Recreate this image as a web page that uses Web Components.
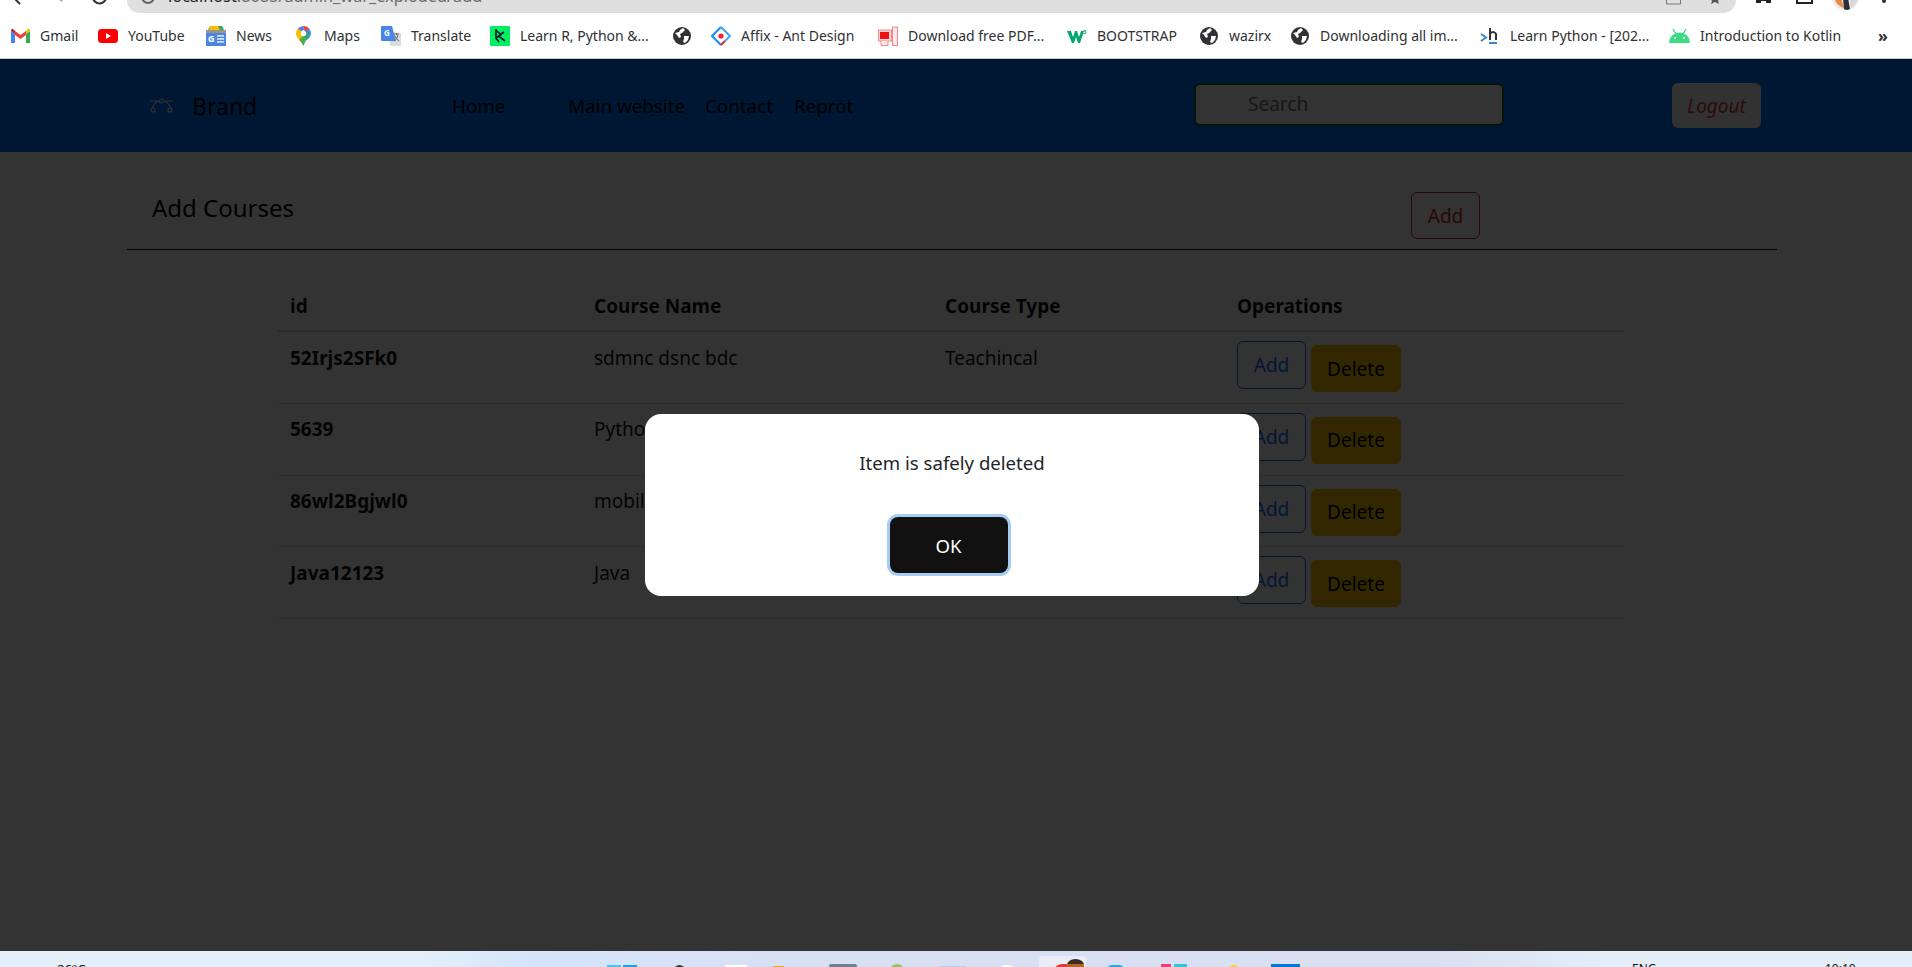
<!DOCTYPE html>
<html lang="en">
<head>
<meta charset="UTF-8">
<title>Add Courses</title>
<style>
  html, body { margin: 0; height: 100%; overflow: hidden; }
  body { font-family: "Noto Sans", "Liberation Sans", sans-serif; color: #212529; background: #fff; }
  #page { display: flex; flex-direction: column; height: 967px; overflow: hidden; }
</style>
<script>
  // small helper: every element gets an open shadow root from a template string
  function define(name, html, Base) {
    const template = document.createElement('template');
    template.innerHTML = html;
    customElements.define(name, class extends (Base || HTMLElement) {
      constructor() {
        super();
        this.attachShadow({ mode: 'open' });
        this.shadowRoot.appendChild(template.content.cloneNode(true));
      }
      connectedCallback() {
        // fill [data-attr] nodes from the attributes of the same name
        this.shadowRoot.querySelectorAll('[data-attr]').forEach(n => {
          n.textContent = this.getAttribute(n.dataset.attr) || '';
        });
        if (this.hasAttribute('w')) this.style.width = this.getAttribute('w') + 'px';
      }
    });
  }

  define('chrome-top', `
    <style>
      :host { display: flex; height: 13px; overflow: hidden; background: #fff; flex: none; }
      .left { width: 127px; flex: none; }
      .pill { width: 1609px; flex: none; height: 13px; background: #dfdfdf; border-radius: 0 0 20px 20px; display: flex; overflow: hidden; }
      .url { margin: -15px 0 0 13px; font-size: 16.3px; line-height: 22px; color: #6a6a6a; white-space: nowrap; }
      .url b { font-weight: 400; color: #222; }
      svg { display: block; flex: none; }
      .right { flex: 1; }
      .tools { margin: 0 9px 0 auto; }
    </style>
    <svg class="left" width="127" height="13" viewBox="0 0 127 13" fill="none" stroke="#333" stroke-width="2">
      <path d="M21 -3 L16 2 L20 6" transform="translate(0,-2)"/><path d="M58 -3 L62 1" stroke="#999"/>
      <path d="M106 -3 A6.5 6.5 0 1 1 93 -3" stroke-width="2.2"/>
    </svg>
    <div class="pill">
      <svg width="14" height="13" viewBox="0 0 14 13" fill="none" stroke="#666" stroke-width="2" style="margin-left:14px"><path d="M13 -3 A6 6 0 0 1 1 -3"/></svg>
      <div class="url"><b>localhost</b>:8085/admin_war_exploded/add</div>
      <svg class="tools" width="70" height="13" viewBox="0 0 70 13">
        <path d="M9.5 -3 v7 h14 v-7" fill="none" stroke="#777" stroke-width="1"/>
        <path d="M53 -2 h10 l-2 3 l1 3 l-4 -2 l-4 2 l1 -3z" fill="#555"/>
      </svg>
    </div>
    <svg class="right" width="176" height="13" viewBox="0 0 176 13">
      <path d="M20 -2 h15 v5 h-5 v-2 h-5 v2 h-5z" fill="#222"/>
      <path d="M61 -2 h15 v5 h-15z" fill="none" stroke="#222" stroke-width="2"/>
      <path d="M96 0 A14 14 0 0 0 123 0 v-2 h-27z" fill="#e8e8e8"/>
      <path d="M98 -2 h7 l3 10 q-7 -2 -10 -10z" fill="#e98b3a"/>
      <path d="M107 -2 h5 l2 11 q-4 2 -6 0z" fill="#2a2f3a"/>
      <path d="M114 -2 h8 q-2 7 -7 10z" fill="#d8d8d8"/>
      <circle cx="148" cy="1" r="2" fill="#333"/>
    </svg>
  `);

  define('book-mark', `
    <style>
      :host { display: flex; align-items: center; flex: none; height: 24px; }
      .icon { width: 21px; height: 20px; display: flex; align-items: center; justify-content: center; flex: none; }
      .text { margin-left: var(--gap, 10px); font-size: 14px; line-height: 20px; color: #303133; white-space: nowrap; }
    </style>
    <span class="icon"><slot name="icon"></slot></span><span class="text" data-attr="label"></span>
  `);

  define('book-marks', `
    <style>
      :host { display: flex; align-items: center; height: 45px; padding: 0 0 0 10px; background: #fff; border-bottom: 1px solid #cfcfcf; flex: none; overflow: hidden; box-sizing: content-box; }
    </style>
    <slot></slot>
  `);

  define('nav-bar', `
    <style>
      :host { display: grid; grid-template-columns: 302px 742px 478px 1fr; align-items: center; height: 93px; padding-left: 150px; background: #0073ff; flex: none; }
      .brand { display: flex; align-items: center; font-size: 23px; color: #000; }
      .brand svg { margin-right: 19px; }
      nav { display: flex; font-size: 18.8px; color: #000; }
      nav span { white-space: nowrap; }
      .search { width: 310px; height: 43px; box-sizing: border-box; border: 2px solid #0f6b2c; border-radius: 6px; background: #fff; padding-left: 52px; font-size: 19px; line-height: 38px; color: #6c757d; margin-top: -2px; }
      .logout { width: 89px; height: 45px; box-sizing: border-box; border-radius: 6px; background: #f8f9fa; color: #dc3545; font-style: italic; font-size: 19px; line-height: 47px; text-align: center; }
    </style>
    <div class="brand">
      <svg width="23" height="15" viewBox="0 0 23 15" fill="none" stroke="#eee" stroke-width="1.2">
        <circle cx="11.5" cy="3" r="2"/><circle cx="3" cy="12" r="2"/><circle cx="20" cy="12" r="2"/>
        <path d="M9.5 3 H0 M13.5 3 H23 M3 10 Q3 5 9.5 3 M20 10 Q20 5 13.5 3"/>
      </svg>
      <span>Brand</span>
    </div>
    <nav>
      <span style="width:116px">Home</span>
      <span style="width:137px">Main website</span>
      <span style="width:89px">Contact</span>
      <span>Reprot</span>
    </nav>
    <div class="search">Search</div>
    <div class="logout">Logout</div>
  `);

  define('page-head', `
    <style>
      :host { display: grid; grid-template-columns: 1284px 69px; align-items: start; width: 1650px; height: 98px; box-sizing: border-box; margin-left: 127px; border-bottom: 1px solid #000; flex: none; }
      h2 { margin: 38px 0 0 25px; font-weight: 400; font-size: 24px; line-height: 36px; color: #000; }
      button { margin-top: 40px; width: 69px; height: 47px; border: 1px solid #c82333; border-radius: 6px; background: none; color: #c82333; font: inherit; font-size: 19px; padding: 0; }
    </style>
    <h2>Add Courses</h2>
    <button>Add</button>
  `);

  define('course-table', `
    <style>
      :host { display: block; width: 1346px; margin: 33px 0 0 278px; }
      .head { display: grid; grid-template-columns: 304px 351px 292px 1fr; height: 49px; box-sizing: border-box; border-bottom: 2px solid #d5d7da; padding-top: 8px; font-weight: 700; font-size: 19px; line-height: 30px; color: #111; }
      .head span { padding-left: 12px; }
    </style>
    <div class="head"><span>id</span><span>Course Name</span><span>Course Type</span><span>Operations</span></div>
    <slot></slot>
  `);

  define('course-row', `
    <style>
      :host { display: grid; grid-template-columns: 304px 351px 292px 1fr; height: 71.75px; box-sizing: border-box; border-bottom: 1px solid #dee2e6; font-size: 19px; line-height: 30px; color: #111; }
      .c { padding: 10.5px 0 0 12px; white-space: nowrap; }
      .id { font-weight: 700; }
      .ops { display: flex; align-items: flex-start; padding: 9px 0 0 12px; }
      button { font: inherit; font-size: 19px; padding: 0; border-radius: 6px; }
      .add { width: 69px; height: 48px; background: none; border: 1px solid #0d6efd; color: #0d6efd; }
      .del { width: 90px; height: 47px; margin: 4px 0 0 5px; background: #ffc107; border: 1px solid #ffc107; color: #000; }
    </style>
    <div class="c id" data-attr="cid"></div>
    <div class="c" data-attr="name"></div>
    <div class="c" data-attr="type"></div>
    <div class="ops"><button class="add">Add</button><button class="del">Delete</button></div>
  `);

  define('alert-dialog', `
    <style>
      :host { position: absolute; inset: 0; display: grid; place-items: center; padding-right: 8px; background: rgba(0,0,0,.8); }
      .box { width: 614px; height: 182px; box-sizing: border-box; padding-top: 36px; background: #fff; border-radius: 16px; display: flex; flex-direction: column; align-items: center; }
      p { margin: 0; font-size: 18.6px; line-height: 26px; color: #212529; }
      button { margin: 41px 7px 0 0; width: 118px; height: 56px; box-sizing: border-box; border: 0; border-radius: 8px; background: #111; color: #fff; font: inherit; font-size: 18.6px; box-shadow: 0 0 0 3px #a5cdf3; }
    </style>
    <div class="box"><p><slot></slot></p><button>OK</button></div>
  `);

  define('app-view', `
    <style>
      :host { display: flex; flex-direction: column; position: relative; flex: 1; min-height: 0; background: #fff; overflow: hidden; }
    </style>
    <slot></slot>
  `);

  define('task-bar', `
    <style>
      :host { display: flex; height: 16px; flex: none; overflow: hidden; background: linear-gradient(90deg, #e3eff9 0%, #e3eff9 22%, #d5e4fb 28%, #d8e0f5 40%, #dadff1 75%, #e3eef9 84%, #e3eef9 100%); }
      .t { font-size: 12px; line-height: 16px; color: #111; white-space: nowrap; margin-top: 10px; }
      i { display: block; flex: none; }
    </style>
    <span class="t" style="margin-left:57px;width:550px;font-size:13px">26°C</span>
    <i style="width:30px;margin-top:14px;height:6px;background:linear-gradient(90deg,#4cc2f1 48%,#e3eaf8 48%,#e3eaf8 54%,#1b9fe9 54%)"></i>
    <i style="width:11px;margin:14px 0 0 37px;height:6px;border-radius:6px 6px 0 0;background:#333"></i>
    <i style="width:22px;margin:14px 0 0 40px;height:6px;background:#fff"></i>
    <i style="width:11px;margin:15px 0 0 26px;height:6px;background:#eda51d"></i>
    <i style="width:28px;margin:13px 0 0 45px;height:6px;background:#6d8391;border-radius:2px 2px 0 0"></i>
    <i style="width:12px;margin:13px 0 0 34px;height:8px;border-radius:50% 50% 0 0;background:#9cc25a"></i>
    <i style="width:27px;margin:15px 0 0 36px;height:6px;background:#b9cdea"></i>
    <i style="width:14px;margin:14px 0 0 34px;height:8px;border-radius:50% 50% 0 0;background:#fff"></i>
    <span style="width:47px;height:14px;margin:5px 0 0 25px;background:#e8edf8;border-radius:4px 4px 0 0;display:flex;flex:none">
      <i style="width:14px;height:9px;margin:8px 0 0 14px;border-radius:9px 0 0 0;background:#e53935"></i>
      <i style="width:17px;height:12px;margin:3px 0 0 0;border-radius:50% 50% 0 0;background:linear-gradient(#3a2a20 40%,#b5651d 40%)"></i>
    </span>
    <i style="width:19px;margin:14px 0 0 20px;height:6px;border-radius:8px 8px 0 0;background:#27a5e0"></i>
    <i style="width:10px;margin:13px 0 0 36px;height:6px;background:#ef3e76"></i>
    <i style="width:13px;margin:13px 0 0 3px;height:6px;background:#2fc5d8"></i>
    <i style="width:10px;margin:14px 0 0 42px;height:6px;background:#f7d33f;border-radius:50% 50% 0 0"></i>
    <i style="width:29px;margin:13px 0 0 32px;height:6px;background:#0078d4"></i>
    <span class="t" style="margin-left:332px;width:193px">ENG</span>
    <span class="t">10:10</span>
  `);
</script>
</head>
<body>
<div id="page">
  <chrome-top></chrome-top>
  <book-marks>
    <book-mark label="Gmail" w="87" style="--gap:9px">
      <svg slot="icon" width="19" height="15" viewBox="0 0 19 15"><path d="M0 3V15H4V6z" fill="#4285f4"/><path d="M15 6V15H19V3z" fill="#34a853"/><path d="M0 3L4 6V3L2 1Q0 0 0 3z" fill="#c5221f"/><path d="M15 3V6L19 3Q19 0 17 1z" fill="#fbbc04"/><path d="M4 3V7L9.5 11L15 7V3L9.5 7z" fill="#ea4335"/></svg>
    </book-mark>
    <book-mark label="YouTube" w="108">
      <svg slot="icon" width="20" height="14" viewBox="0 0 20 14"><rect width="20" height="14" rx="3.5" fill="#f00"/><path d="M8 4L13 7L8 10z" fill="#fff"/></svg>
    </book-mark>
    <book-mark label="News" w="88">
      <svg slot="icon" width="20" height="20" viewBox="0 0 20 20"><path d="M2 4L4 0H16L18 4z" fill="#34a853"/><path d="M4 0H12L14 4H3z" fill="#fbbc04"/><rect y="4" width="20" height="16" fill="#4a86e8"/><rect y="4" x="0" width="20" height="3" fill="#e8a33d" opacity=".5"/><text x="2" y="16" font-family="Noto Sans" font-weight="700" font-size="9" fill="#fff">G</text><path d="M11 9h7v1.8h-7zM11 12h7v1.8h-7zM11 15h7v1.8h-7z" fill="#cfe0fb"/></svg>
    </book-mark>
    <book-mark label="Maps" w="87">
      <svg slot="icon" width="15" height="20" viewBox="0 0 15 20"><path d="M7.5 20C5 15 0 12 0 7.5A7.5 7.5 0 0 1 3 1.5L7.5 7.5z" fill="#fbbc04"/><path d="M2 2.5A7.5 7.5 0 0 1 7.5 0L8 4L5 5z" fill="#4285f4"/><path d="M7 0A7.5 7.5 0 0 1 13.5 3L9.5 8z" fill="#ea4335" /><path d="M13 2.5A7.5 7.5 0 0 1 15 7.5C15 10 13 12 11 14L5 8z" fill="#4285f4"/><path d="M7.5 20C6 17 5 15.5 3.5 14L11.5 5C15 9 11 13 9.5 15.5Q8.5 17 7.5 20z" fill="#34a853" opacity=".9"/><circle cx="7.5" cy="7.5" r="2.7" fill="#fff"/></svg>
    </book-mark>
    <book-mark label="Translate" w="109">
      <svg slot="icon" width="20" height="20" viewBox="0 0 20 20"><path d="M7 6L20 7V20H9z" fill="#dcdcdc"/><path d="M1 0H11L15 15H1Q0 15 0 14V1Q0 0 1 0z" fill="#4a86e8"/><text x="3" y="10" font-family="Noto Sans" font-weight="700" font-size="8" fill="#fff">G</text><path d="M13 8h5M15.5 7v2M17 9q-1 5-4 6M14 10q1 3 4 5" stroke="#667" stroke-width="1" fill="none"/></svg>
    </book-mark>
    <book-mark label="Learn R, Python &amp;..." w="182">
      <svg slot="icon" width="20" height="20" viewBox="0 0 20 20"><rect width="20" height="20" fill="#03ef62"/><path d="M6 3V12L11 8.5L6 4.5M9 16L6 12M14 6L8.5 10L15 15" fill="none" stroke="#05192d" stroke-width="1.6"/></svg>
    </book-mark>
    <book-mark w="39">
      <svg slot="icon" width="18" height="18" viewBox="0 0 18 18"><circle cx="9" cy="9" r="9" fill="#303236"/><path d="M2 6L6 5L7 3L10 1L12 3L9 6L7 7L8 10L6 11L4 8zM11 9L16 9L15 13L12 16L10 15L11 12z" fill="#fff"/></svg>
    </book-mark>
    <book-mark label="Affix - Ant Design" w="167">
      <svg slot="icon" width="20" height="20" viewBox="0 0 20 20"><path d="M10 1L1 10L10 19" fill="none" stroke="#1890ff" stroke-width="2.2"/><path d="M10 1L19 10L14 15" fill="none" stroke="#40a9ff" stroke-width="2.2"/><path d="M14 15L10 19" stroke="#f5222d" stroke-width="2.2"/><circle cx="10" cy="10" r="2.6" fill="#f5222d"/></svg>
    </book-mark>
    <book-mark label="Download free PDF..." w="189">
      <svg slot="icon" width="20" height="20" viewBox="0 0 20 20"><rect x="0.5" y="4" width="13" height="11" fill="#fbd4d4" stroke="#ee8a8a"/><rect x="2" y="6" width="9" height="7" fill="#e11"/><rect x="14.5" y="1" width="5" height="18.5" fill="#fde8e8" stroke="#ee8a8a"/><path d="M3 15v4.5h7v-4.5" fill="#fde8e8" stroke="#ee8a8a"/></svg>
    </book-mark>
    <book-mark label="BOOTSTRAP" w="132">
      <svg slot="icon" width="20" height="14" viewBox="0 0 20 14"><path d="M0 2H4L6 8L8 2H10L12 8L14 2H17L13 14H11L9 8L7 14H5z" fill="#04aa6d"/><text x="16" y="5" font-family="Noto Sans" font-weight="700" font-size="6" fill="#04aa6d">3</text></svg>
    </book-mark>
    <book-mark label="wazirx" w="91">
      <svg slot="icon" width="18" height="18" viewBox="0 0 18 18"><circle cx="9" cy="9" r="9" fill="#303236"/><path d="M2 6L6 5L7 3L10 1L12 3L9 6L7 7L8 10L6 11L4 8zM11 9L16 9L15 13L12 16L10 15L11 12z" fill="#fff"/></svg>
    </book-mark>
    <book-mark label="Downloading all im..." w="190">
      <svg slot="icon" width="18" height="18" viewBox="0 0 18 18"><circle cx="9" cy="9" r="9" fill="#303236"/><path d="M2 6L6 5L7 3L10 1L12 3L9 6L7 7L8 10L6 11L4 8zM11 9L16 9L15 13L12 16L10 15L11 12z" fill="#fff"/></svg>
    </book-mark>
    <book-mark label="Learn Python - [202..." w="190">
      <svg slot="icon" width="19" height="18" viewBox="0 0 19 18"><path d="M1 7L6 10.5L1 14" fill="none" stroke="#3c86c8" stroke-width="2"/><path d="M10 1V13M10 7Q11 5 13 5T16 7V13" fill="none" stroke="#303236" stroke-width="2"/><path d="M9 16H17" stroke="#3c86c8" stroke-width="2"/></svg>
    </book-mark>
    <book-mark label="Introduction to Kotlin" w="209">
      <svg slot="icon" width="21" height="14" viewBox="0 0 21 14"><path d="M0 14A10.5 10.5 0 0 1 21 14z" fill="#3ddc84"/><path d="M4 0L7 5M17 0L14 5" stroke="#3ddc84" stroke-width="1.4"/><circle cx="6" cy="9" r="1" fill="#fff"/><circle cx="15" cy="9" r="1" fill="#fff"/></svg>
    </book-mark>
    <span style="font-size:16px;color:#303133;font-weight:700;line-height:20px">»</span>
  </book-marks>
  <app-view>
    <nav-bar></nav-bar>
    <page-head></page-head>
    <course-table>
      <course-row cid="52Irjs2SFk0" name="sdmnc dsnc bdc" type="Teachincal"></course-row>
      <course-row cid="5639" name="Python" type=""></course-row>
      <course-row cid="86wl2Bgjwl0" name="mobile" type=""></course-row>
      <course-row cid="Java12123" name="Java" type=""></course-row>
    </course-table>
    <alert-dialog>Item is safely deleted</alert-dialog>
  </app-view>
  <task-bar></task-bar>
</div>
</body>
</html>
